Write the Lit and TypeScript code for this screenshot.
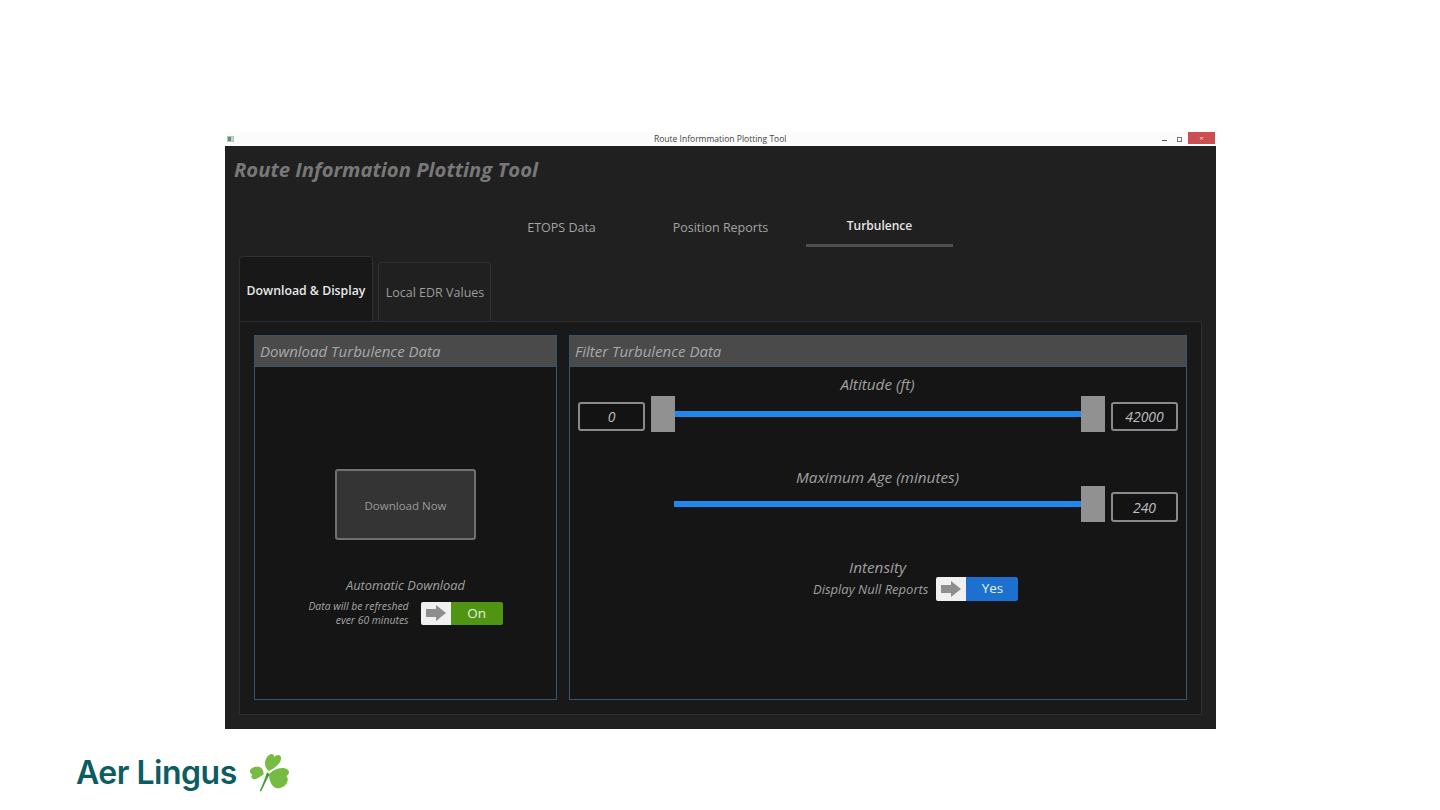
import { LitElement, html, css } from "lit";
import { customElement } from "lit/decorators.js";

@customElement("app-root")
export class AppRoot extends LitElement {
  static styles = css`
    :host {
      display: block;
      width: 1440px;
      height: 810px;
      background: #fff;
      overflow: hidden;
      font-family: "Open Sans", "Noto Sans", sans-serif;
      padding-top: 132px;
      box-sizing: border-box;
    }

    .window {
      width: 991px;
      height: 597px;
      margin-left: 225px;
      display: flex;
      flex-direction: column;
      background: #202020;
    }

    .titlebar {
      height: 14px;
      flex: none;
      background: #fbfbfb;
      display: flex;
      align-items: center;
      position: relative;
      font-size: 8.5px;
      color: #444;
    }
    .app-icon {
      width: 7px;
      height: 6px;
      margin-left: 2px;
      background: linear-gradient(90deg, #5f8f72 50%, #c4d4ca 50%);
      border: 1px solid #b5c5ba;
      box-sizing: border-box;
    }
    .titlebar .name {
      position: absolute;
      left: 429px;
      top: 1px;
      white-space: nowrap;
    }
    .controls {
      margin-left: auto;
      display: flex;
      align-items: center;
      height: 100%;
    }
    .min {
      width: 5px;
      height: 1px;
      background: #555;
      margin-right: 10px;
      margin-top: 2px;
    }
    .max {
      width: 5px;
      height: 5px;
      border: 1px solid #777;
      box-sizing: border-box;
      margin-right: 6px;
    }
    .close {
      width: 27px;
      height: 12px;
      margin-top: -2px;
      margin-right: 1px;
      background: #cb4f50;
      color: #f0d0d0;
      font-size: 8px;
      line-height: 12px;
      text-align: center;
    }

    h1 {
      margin: 0;
      padding: 8px 0 0 9px;
      height: 34px;
      font-size: 20.3px;
      line-height: 30px;
      font-weight: 700;
      font-style: italic;
      color: #787878;
      white-space: nowrap;
    }

    .nav {
      display: grid;
      grid-template-columns: 147px 147px 147px;
      column-gap: 12px;
      margin: 24px 0 0 263px;
      height: 44px;
    }
    .nav div {
      text-align: center;
      font-size: 12.5px;
      line-height: 18px;
      color: #a3a3a3;
      padding-top: 7px;
      box-sizing: border-box;
    }
    .nav .active {
      color: #e6e6e6;
      font-size: 12px;
      font-weight: 600;
      padding-top: 5px;
      border-bottom: 3px solid #4e4e4e;
      height: 35px;
    }

    .tabs {
      display: flex;
      align-items: flex-end;
      gap: 5px;
      margin-left: 14px;
      height: 65px;
      flex: none;
    }
    .tab {
      box-sizing: border-box;
      border: 1px solid #303030;
      border-bottom: none;
      border-radius: 4px 4px 0 0;
      color: #9c9c9c;
      font-size: 12.5px;
      text-align: center;
    }
    .tab.first {
      width: 134px;
      height: 65px;
      background: #181818;
      color: #e8e8e8;
      font-size: 12.3px;
      font-weight: 600;
      line-height: 67px;
      position: relative;
      z-index: 1;
    }
    .tab.second {
      width: 113px;
      height: 59px;
      padding-left: 1px;
      line-height: 59px;
    }

    .content {
      margin-left: 14px;
      width: 963px;
      height: 394px;
      box-sizing: border-box;
      border: 1px solid #2e2e2e;
      background: #191919;
      padding: 13px 14px 14px;
      display: grid;
      grid-template-columns: 303px 618px;
      column-gap: 12px;
      flex: none;
    }

    .panel {
      border: 1px solid #35566e;
      background: #151515;
      display: flex;
      flex-direction: column;
      box-sizing: border-box;
      min-height: 0;
    }
    .panel-head {
      height: 31px;
      flex: none;
      box-sizing: border-box;
      background: #4a4a4a;
      border-bottom: 1px solid #35566e;
      font-size: 15px;
      line-height: 31px;
      padding-left: 5px;
      font-style: italic;
      color: #a8a8a8;
      white-space: nowrap;
    }

    .dl {
      flex: 1;
      display: flex;
      flex-direction: column;
      align-items: center;
      padding-top: 102px;
    }
    .dl-btn {
      width: 141px;
      height: 71px;
      box-sizing: border-box;
      background: #343434;
      border: 2px solid #707070;
      border-radius: 3px;
      color: #9b9b9b;
      font-size: 11.5px;
      line-height: 69px;
      text-align: center;
    }
    .caption {
      font-size: 15.3px;
      line-height: 20px;
      font-style: italic;
      color: #a0a0a0;
      text-align: center;
      white-space: nowrap;
    }
    .dl .caption {
      font-size: 12.9px;
      line-height: 18px;
      margin-top: 36px;
    }
    .auto {
      display: flex;
      align-items: center;
      gap: 12px;
      margin-top: 5px;
    }
    .note {
      font-size: 10.4px;
      line-height: 14px;
      font-style: italic;
      color: #a6a6a6;
      text-align: right;
      white-space: nowrap;
    }

    .toggle {
      width: 82px;
      height: 23px;
      display: flex;
      border-radius: 2px;
      overflow: hidden;
      flex: none;
    }
    .toggle .knob {
      width: 30px;
      background: #f0f0f0;
      display: flex;
      align-items: center;
      justify-content: center;
    }
    .toggle .state {
      flex: 1;
      text-align: center;
      color: #e8f2e0;
      font-size: 13.5px;
      line-height: 23px;
    }
    .toggle.green .state {
      background: #4f9412;
    }
    .toggle.blue {
      height: 24px;
    }
    .toggle.blue .state {
      background: #1c70cf;
    }

    .filter {
      flex: 1;
      display: flex;
      flex-direction: column;
      padding: 7px 8px 0 8px;
    }
    .filter > .caption {
      margin-left: -1px;
    }
    .slider {
      display: grid;
      grid-template-columns: 67px 30px 1fr 24px 6px 67px;
      align-items: center;
      height: 36px;
      margin-top: 2px;
    }
    .box {
      height: 29px;
      box-sizing: border-box;
      border: 2px solid #8a8a8a;
      border-radius: 3px;
      font-size: 14px;
      line-height: 25px;
      font-style: italic;
      color: #bdbdbd;
      text-align: center;
      background: #131313;
      margin-top: 5px;
    }
    .thumb {
      height: 36px;
      background: #919191;
    }
    .thumb.low {
      margin-left: 6px;
    }
    .track {
      height: 6px;
      background: #2087ee;
    }
    .slider.second {
      margin-top: -1px;
    }
    .slider.second .track {
      margin-left: -1px;
    }
    .slider.second .box {
      height: 30px;
      line-height: 27px;
      margin-top: 6px;
    }
    .age {
      margin-top: 35px;
    }
    .filter .intensity {
      margin-top: 35px;
    }
    .null-row {
      display: flex;
      align-items: center;
      gap: 8px;
      margin-left: 235px;
    }
    .null-row .label {
      font-size: 13px;
      font-style: italic;
      color: #9f9f9f;
      white-space: nowrap;
    }

    .brand {
      display: flex;
      align-items: center;
      margin: 20px 0 0 76px;
      height: 48px;
    }
    .brand span {
      font-family: Inter, "Open Sans", sans-serif;
      font-size: 32px;
      line-height: 44px;
      font-weight: 600;
      color: #0d5c63;
      letter-spacing: -0.5px;
      white-space: nowrap;
      width: 169px;
    }
  `;

  private arrow() {
    return html`<svg width="20" height="16" viewBox="0 0 20 16">
      <path d="M0 4h10V0l10 8-10 8v-4H0z" fill="#8e8e8e" />
    </svg>`;
  }

  private shamrock() {
    return html`<svg width="50" height="48" viewBox="0 0 150 144">
      <g fill="#76bc43">
        <path d="M72 66C62 60 58 48 61 36c3-13 12-22 20-21 4 1 6 5 7 9 5-6 14-8 18-3 5 7 1 18-8 27-8 8-17 14-26 18z" />
        <path d="M56 76C44 84 30 96 21 88c-4-4-2-8 1-11-6-3-9-9-6-15 7-9 24-12 34-4 4 4 6 12 6 18z" />
        <path d="M72 76c8-10 24-19 40-19 13 0 21 7 20 14-1 4-4 8-8 10 5 5 6 13 2 20-6 12-22 20-35 15-13-5-19-24-19-40z" />
      </g>
      <path d="M66 70C60 88 54 106 44 126c2 1 4 1 5 0C58 108 66 90 74 76z" fill="#3f9c3c" />
    </svg>`;
  }

  render() {
    return html`
      <div class="window">
        <div class="titlebar">
          <div class="app-icon"></div>
          <div class="name">Route Informmation Plotting Tool</div>
          <div class="controls">
            <div class="min"></div>
            <div class="max"></div>
            <div class="close">×</div>
          </div>
        </div>
        <h1>Route Information Plotting Tool</h1>
        <div class="nav">
          <div>ETOPS Data</div>
          <div>Position Reports</div>
          <div class="active">Turbulence</div>
        </div>
        <div class="tabs">
          <div class="tab first">Download &amp; Display</div>
          <div class="tab second">Local EDR Values</div>
        </div>
        <div class="content">
          <section class="panel">
            <div class="panel-head">Download Turbulence Data</div>
            <div class="dl">
              <div class="dl-btn">Download Now</div>
              <div class="caption">Automatic Download</div>
              <div class="auto">
                <div class="note">Data will be refreshed<br />ever 60 minutes</div>
                <div class="toggle green">
                  <div class="knob">${this.arrow()}</div>
                  <div class="state">On</div>
                </div>
              </div>
            </div>
          </section>
          <section class="panel">
            <div class="panel-head">Filter Turbulence Data</div>
            <div class="filter">
              <div class="caption">Altitude (ft)</div>
              <div class="slider">
                <div class="box">0</div>
                <div class="thumb low"></div>
                <div class="track"></div>
                <div class="thumb"></div>
                <div></div>
                <div class="box">42000</div>
              </div>
              <div class="caption age">Maximum Age (minutes)</div>
              <div class="slider second">
                <div></div>
                <div></div>
                <div class="track"></div>
                <div class="thumb"></div>
                <div></div>
                <div class="box">240</div>
              </div>
              <div class="caption intensity">Intensity</div>
              <div class="null-row">
                <div class="label">Display Null Reports</div>
                <div class="toggle blue">
                  <div class="knob">${this.arrow()}</div>
                  <div class="state">Yes</div>
                </div>
              </div>
            </div>
          </section>
        </div>
      </div>
      <div class="brand">
        <span>Aer Lingus</span>
        ${this.shamrock()}
      </div>
    `;
  }
}
